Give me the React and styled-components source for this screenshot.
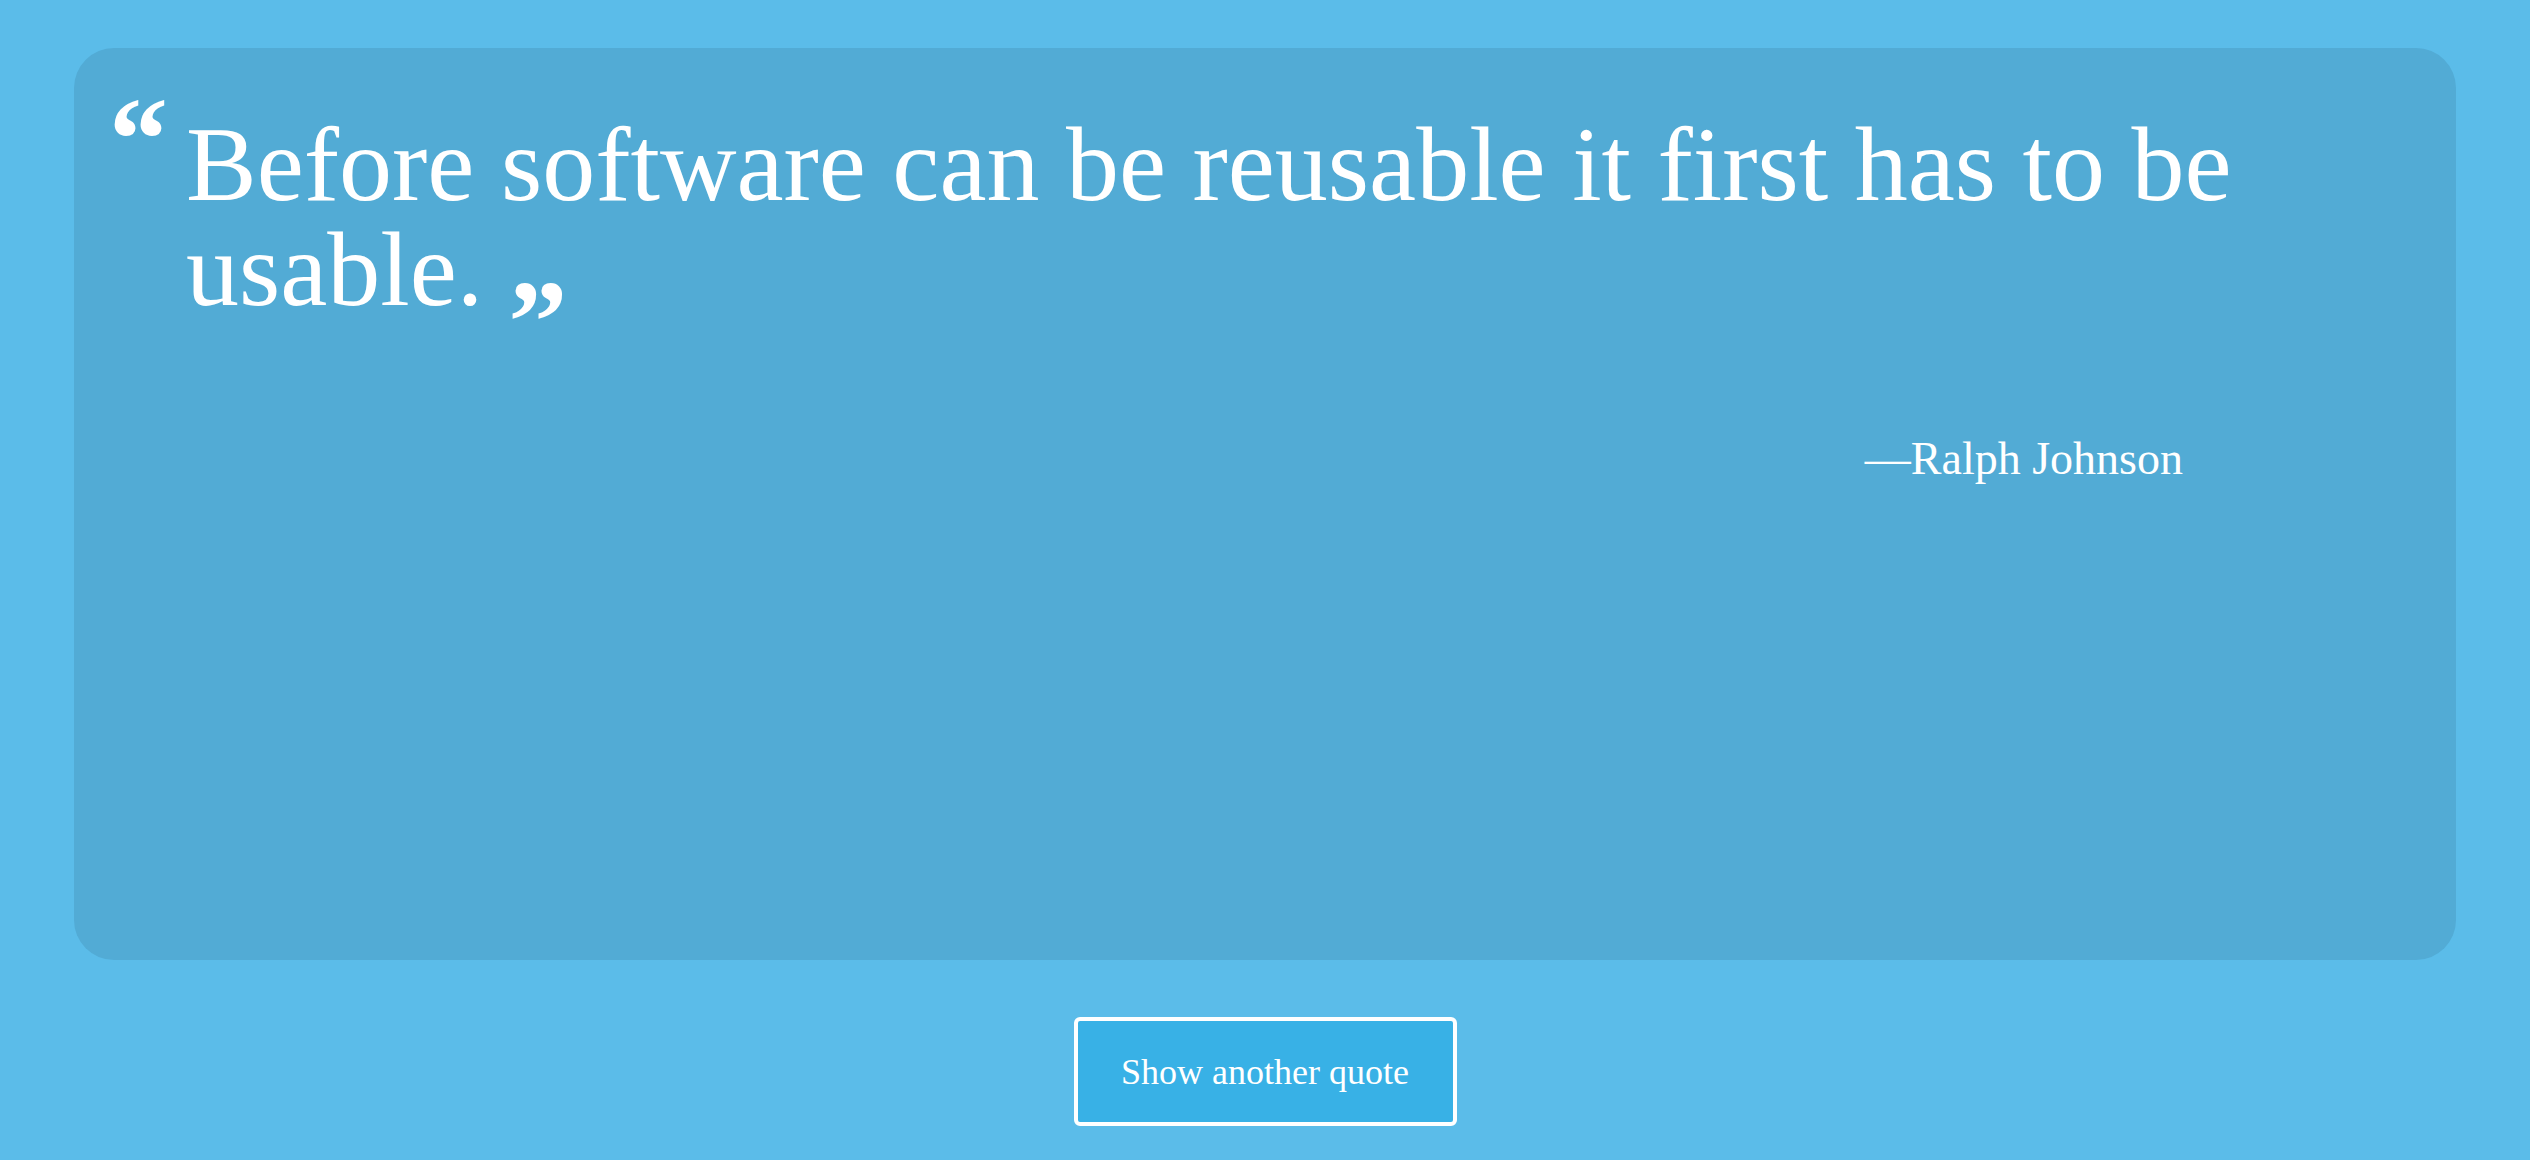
import React from "react";
import styled, { createGlobalStyle } from "styled-components";

const GlobalStyle = createGlobalStyle`
  html, body {
    margin: 0;
    padding: 0;
    background: #5bbce9;
  }
  * { box-sizing: border-box; }
`;

const Page = styled.main`
  min-height: 1160px;
  background: #5bbce9;
  padding: 48px 74px 0;
  display: flex;
  flex-direction: column;
  align-items: center;
  font-family: "Liberation Serif", "Times New Roman", serif;
  color: #ffffff;
`;

const Card = styled.section`
  align-self: stretch;
  height: 912px;
  background: #52abd5;
  border-radius: 40px;
  padding: 33px 74px 0 35px;
  display: flex;
  flex-direction: column;
`;

const QuoteRow = styled.div`
  display: flex;
  align-items: flex-start;
`;

const OpenMark = styled.span`
  display: block;
  flex: 0 0 77px;
  font-family: "Liberation Serif", serif;
  font-weight: 700;
  font-size: 118px;
  line-height: 1;
`;

const QuoteText = styled.blockquote`
  margin: 31px 0 0;
  font-size: 106px;
  line-height: 105px;
  font-weight: 400;

  &::after {
    content: "„";
    display: inline-block;
    margin-left: 26px;
    font-weight: 700;
    font-size: 118px;
    line-height: 56px;
    vertical-align: 5px;
  }
`;

const Author = styled.cite`
  align-self: flex-end;
  margin: 109px 199px 0 0;
  font-style: normal;
  font-size: 46px;
  line-height: 1.2;
  letter-spacing: 0;
`;

const NextButton = styled.button`
  margin-top: 57px;
  width: 383px;
  height: 109px;
  display: flex;
  align-items: center;
  justify-content: center;
  background: #38b1e6;
  border: 4px solid #ffffff;
  border-radius: 6px;
  color: #ffffff;
  font-family: "Liberation Serif", "Times New Roman", serif;
  font-size: 36px;
  cursor: pointer;
  padding: 0;
`;

export default function App() {
  return (
    <>
      <GlobalStyle />
      <Page>
        <Card>
          <QuoteRow>
            <OpenMark>“</OpenMark>
            <QuoteText>
              Before software can be reusable it first has to be usable.
            </QuoteText>
          </QuoteRow>
          <Author>—Ralph Johnson</Author>
        </Card>
        <NextButton>Show another quote</NextButton>
      </Page>
    </>
  );
}
